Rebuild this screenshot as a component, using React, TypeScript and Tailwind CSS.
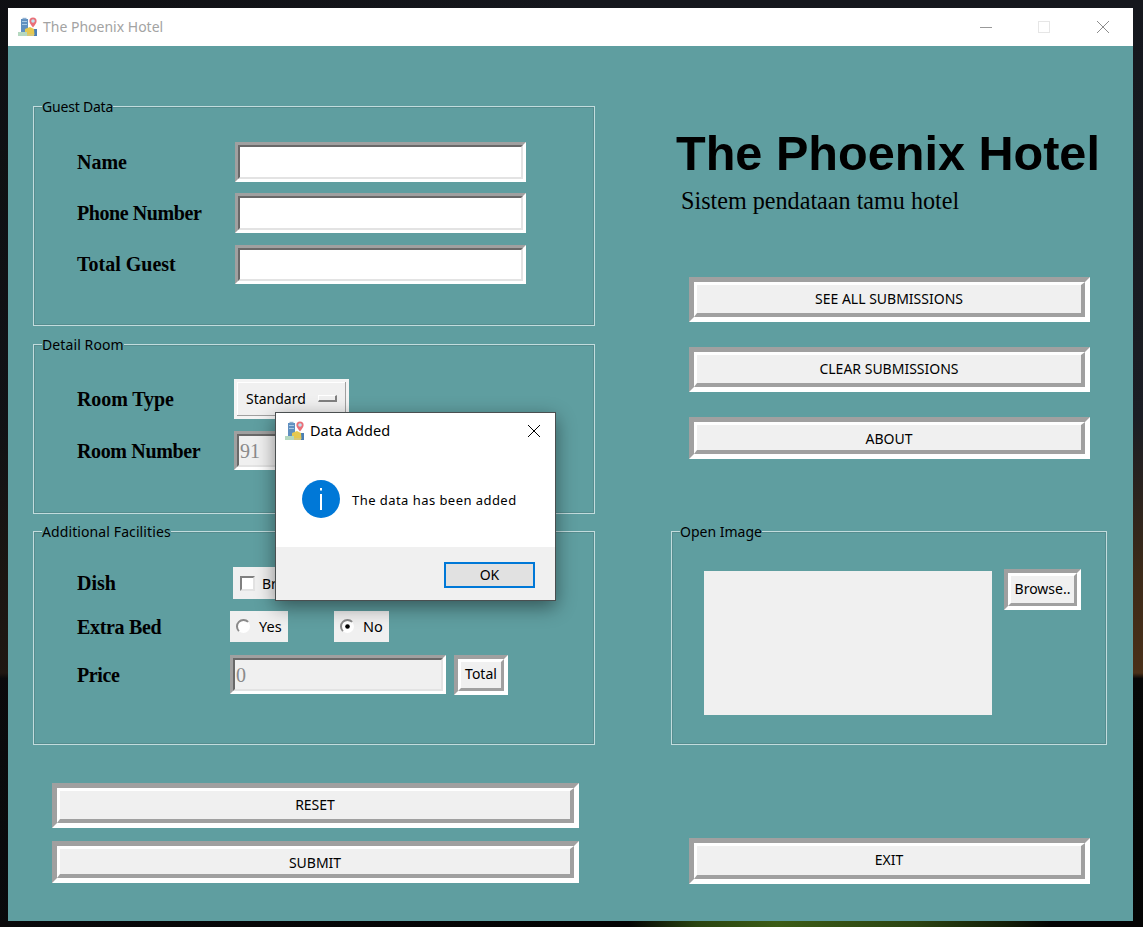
import React from "react";

const ui = "font-['Noto_Sans','Open_Sans',sans-serif]";
const serif = "font-['Liberation_Serif','Times_New_Roman',serif]";

function HotelIcon() {
  return (
    <svg width="20" height="20" viewBox="0 0 20 20" className="shrink-0">
      <rect x="3" y="2" width="7" height="16" fill="#5f8fc0" />
      <rect x="4.5" y="0.8" width="4" height="1.4" fill="#8fb0d0" />
      <rect x="4" y="4" width="5" height="1" fill="#a9c9e4" />
      <rect x="4" y="7" width="5" height="1" fill="#a9c9e4" />
      <rect x="14" y="12" width="5" height="7" fill="#4a7fb5" />
      <path d="M7 12 L12 10 L16 12 L16.5 18 L7 18 Z" fill="#e6c850" />
      <rect x="0" y="15" width="9" height="4" fill="#b5d8c0" />
      <rect x="9" y="17" width="7" height="2" fill="#d8c878" />
      <path d="M15 10.5 C12.2 7 11.4 5.6 11.4 4 A3.6 3.6 0 0 1 18.6 4 C18.6 5.6 17.8 7 15 10.5 Z" fill="#ea6f78" />
      <circle cx="15" cy="4" r="1.8" fill="#bfe3f0" />
    </svg>
  );
}

function Raised({
  className,
  children,
  thin,
  inner = "",
}: {
  className: string;
  children?: React.ReactNode;
  thin?: boolean;
  inner?: string;
}) {
  return (
    <div
      className={`${thin ? "border-4" : "border-[5px]"} border-t-[#a0a0a0] border-l-[#a0a0a0] border-b-white border-r-white ${className}`}
    >
      <div
        className={`h-full flex items-center justify-center bg-[#f0f0f0] text-[14px] text-black ${ui} ${thin ? "border-[3px]" : "border-[3px] border-b-4 border-r-4"} border-t-white border-l-white border-b-[#a0a0a0] border-r-[#a0a0a0] ${inner}`}
      >
        {children}
      </div>
    </div>
  );
}

function Sunken({ className, value, disabled }: { className: string; value?: string; disabled?: boolean }) {
  return (
    <div className={`border-[3px] border-t-[#a0a0a0] border-l-[#a0a0a0] border-b-white border-r-white ${className}`}>
      <div
        className={`h-full flex items-center pl-[1px] border-2 border-t-[#696969] border-l-[#696969] border-b-[#e3e3e3] border-r-[#e3e3e3] text-[20px] text-[#8a8a8a] ${serif} ${disabled ? "bg-[#f0f0f0]" : "bg-white"}`}
      >
        {value}
      </div>
    </div>
  );
}

function Group({
  title,
  className,
  titleClass = "",
  children,
}: {
  title: string;
  className: string;
  titleClass?: string;
  children?: React.ReactNode;
}) {
  return (
    <div className={`relative border border-[#c2dcdd] shadow-[inset_0_0_0_1px_#568d8f] ${className}`}>
      <span className={`absolute left-[8px] top-[-9px] bg-[#5f9ea0] text-[14px] leading-[18px] text-black ${ui} ${titleClass}`}>{title}</span>
      {children}
    </div>
  );
}

function Label({ children, className }: { children: React.ReactNode; className: string }) {
  return <div className={`${serif} text-[20px] font-bold leading-none text-black shrink-0 ${className}`}>{children}</div>;
}

function Radio({ label, checked, className }: { label: string; checked?: boolean; className: string }) {
  return (
    <div className={`flex items-center h-[31px] pl-[6px] bg-[#f0f0f0] text-[14.5px] text-black ${ui} ${className}`}>
      <svg width="15" height="15" viewBox="0 0 15 15" className="shrink-0 mr-[8px] -mt-[1px]">
        <circle cx="7.5" cy="7.5" r="6.5" fill="#ffffff" />
        <path d="M2.9 12.1 A6.5 6.5 0 0 1 12.1 2.9" fill="none" stroke="#8a8a8a" strokeWidth="2" />
        {checked && <circle cx="7.5" cy="7.5" r="2.3" fill="#000000" />}
      </svg>
      {label}
    </div>
  );
}

export default function App() {
  return (
    <div className="w-[1143px] h-[927px] overflow-hidden pt-[8px] pl-[8px] [background:linear-gradient(90deg,transparent_55%,#2a4410_61%,#3c5c16_68%,#2c4412_80%,#141f08_88%,transparent_92%)_bottom/100%_6px_no-repeat,linear-gradient(90deg,rgba(12,12,14,0.7),rgba(12,12,14,0)_50%),linear-gradient(180deg,#15171d_0%,#1b1d24_45%,#3d2a18_62%,#4a3018_72.6%,#070707_73.2%,#040404_100%)]">
      <div className="relative w-[1125px] h-[913px] flex flex-col bg-[#5f9ea0]">
        {/* Title bar */}
        <div className="h-[38px] shrink-0 bg-white flex items-center pl-[10px]">
          <HotelIcon />
          <span className={`ml-[5px] -mt-[1px] text-[14px] text-[#a3a3a3] ${ui}`}>The Phoenix Hotel</span>
          <div className="ml-auto flex items-center">
            <svg width="14" height="14" viewBox="0 0 14 14" className="mr-[44px]">
              <path d="M1 7.5 H13" stroke="#999999" strokeWidth="1" />
            </svg>
            <svg width="14" height="14" viewBox="0 0 14 14" className="mr-[45px]">
              <rect x="1.5" y="1.5" width="11" height="11" fill="none" stroke="#e6e6e6" strokeWidth="1" />
            </svg>
            <svg width="14" height="14" viewBox="0 0 14 14" className="mr-[23px]">
              <path d="M1 1 L13 13 M13 1 L1 13" stroke="#8c8c8c" strokeWidth="1" />
            </svg>
          </div>
        </div>

        {/* Body */}
        <div className="flex flex-1">
          {/* Left column */}
          <div className="w-[587px] shrink-0 pl-[25px] pt-[60px]">
            <Group title="Guest Data" titleClass="tracking-[-0.2px]" className="w-[562px] h-[220px] pt-[35px] pl-[43px]">
              <div className="flex items-center">
                <Label className="w-[158px]">Name</Label>
                <Sunken className="w-[291px] h-[40px]" />
              </div>
              <div className="flex items-center mt-[11px]">
                <Label className="w-[158px] tracking-[-0.42px]">Phone Number</Label>
                <Sunken className="w-[291px] h-[40px]" />
              </div>
              <div className="flex items-center mt-[12px]">
                <Label className="w-[158px] pb-[2px]">Total Guest</Label>
                <Sunken className="w-[291px] h-[39px]" />
              </div>
            </Group>

            <Group title="Detail Room" titleClass="tracking-[0.1px]" className="mt-[18px] w-[562px] h-[170px] pt-[34px] pl-[43px] flex flex-col gap-[12px]">
              <div className="flex items-center">
                <Label className="w-[157px] tracking-[-0.1px]">Room Type</Label>
                <div className="w-[115px] h-[40px] border-[3px] border-[#f4f4f4] bg-[#f0f0f0] shadow-[inset_-1px_-1px_0_#a0a0a0,inset_1px_1px_0_#ffffff] flex items-center pl-[9px]">
                  <span className={`text-[14px] text-black -mt-[1px] ${ui}`}>Standard</span>
                  <span className="ml-auto mr-[9px] -mt-[1px] w-[19px] h-[7px] bg-[#f0f0f0] border border-b-2 border-r-2 border-t-white border-l-white border-b-[#808080] border-r-[#808080]" />
                </div>
              </div>
              <div className="flex items-center">
                <Label className="w-[157px] tracking-[-0.36px]">Room Number</Label>
                <Sunken className="w-[291px] h-[39px]" value="91" disabled />
              </div>
            </Group>

            <Group title="Additional Facilities" titleClass="tracking-[0.1px]" className="mt-[17px] w-[562px] h-[214px] pt-[35px] pl-[43px]">
              <div className="flex items-center h-[32px]">
                <Label className="w-[156px]">Dish</Label>
                <div className={`flex items-center h-[32px] pl-[7px] pr-[10px] bg-[#f0f0f0] text-[14px] text-black ${ui}`}>
                  <span className="w-[15px] h-[15px] mr-[7px] bg-white border-2 border-t-[#808080] border-l-[#808080] border-b-[#e3e3e3] border-r-[#e3e3e3]" />
                  Breakfast
                </div>
              </div>
              <div className="flex items-center mt-[12px]">
                <Label className="w-[153px] tracking-[-0.33px]">Extra Bed</Label>
                <Radio label="Yes" className="w-[58px]" />
                <Radio label="No" checked className="ml-[46px] w-[55px]" />
              </div>
              <div className="flex items-start mt-[13px]">
                <Label className="w-[153px] self-center tracking-[-0.4px]">Price</Label>
                <Sunken className="w-[216px] h-[39px]" value="0" disabled />
                <Raised thin inner="pb-[3px]" className="ml-[8px] w-[54px] h-[40px]">
                  Total
                </Raised>
              </div>
            </Group>

            <div className="ml-[19px] mt-[38px] flex flex-col gap-[13px]">
              <Raised inner="pb-[2px]" className="w-[527px] h-[45px]">RESET</Raised>
              <Raised inner="pt-[2px]" className="w-[527px] h-[42px]">SUBMIT</Raised>
            </div>
          </div>

          {/* Right column */}
          <div className="flex-1 flex flex-col pt-[79px]">
            <div className="ml-[81px] h-[56px] font-['Liberation_Sans',Arial,sans-serif] font-bold text-[48.6px] leading-[56px] text-black whitespace-nowrap">
              The Phoenix Hotel
            </div>
            <div className={`ml-[86px] mt-[5px] h-[30px] text-[24.15px] leading-[30px] text-black whitespace-nowrap ${serif}`}>
              Sistem pendataan tamu hotel
            </div>
            <Raised inner="pb-[2px]" className="ml-[94px] mt-[61px] w-[401px] h-[45px]">SEE ALL SUBMISSIONS</Raised>
            <Raised inner="pb-[2px]" className="ml-[94px] mt-[25px] w-[401px] h-[45px]">CLEAR SUBMISSIONS</Raised>
            <Raised inner="pt-[2px]" className="ml-[94px] mt-[25px] w-[401px] h-[42px]">ABOUT</Raised>
            <Group title="Open Image" className="ml-[76px] mt-[72px] w-[436px] h-[214px] pt-[37px] pl-[32px] flex items-start">
              <div className="mt-[2px] w-[288px] h-[144px] bg-[#f0f0f0]" />
              <Raised thin inner="pb-[2px]" className="ml-[12px] w-[77px] h-[41px]">
                Browse..
              </Raised>
            </Group>
            <Raised inner="pb-[2px]" className="ml-[94px] mt-[93px] w-[401px] h-[46px]">EXIT</Raised>
          </div>
        </div>

        {/* Message dialog */}
        <div className="absolute left-[267px] top-[404px] w-[281px] h-[189px] flex flex-col bg-white border border-[#4a4f50] shadow-[0_6px_18px_rgba(0,0,0,0.45)]">
          <div className="h-[36px] shrink-0 flex items-center pl-[9px]">
            <HotelIcon />
            <span className={`ml-[5px] text-[14.5px] text-black ${ui}`}>Data Added</span>
            <svg width="14" height="14" viewBox="0 0 14 14" className="ml-auto mr-[14px]">
              <path d="M1 1 L13 13 M13 1 L1 13" stroke="#000000" strokeWidth="1" />
            </svg>
          </div>
          <div className="flex-1 flex items-center pl-[26px] pt-[2px]">
            <svg width="38" height="38" viewBox="0 0 38 38" className="shrink-0">
              <circle cx="19" cy="19" r="19" fill="#0078d7" />
              <rect x="18" y="8" width="2" height="2.5" fill="#ffffff" />
              <rect x="18" y="14" width="2" height="16" fill="#ffffff" />
            </svg>
            <span className={`ml-[12px] mt-[3px] text-[13px] tracking-[0.45px] text-black ${ui}`}>The data has been added</span>
          </div>
          <div className="h-[53px] shrink-0 bg-[#f0f0f0] flex justify-end items-start pt-[15px] pr-[20px]">
            <div className={`w-[91px] h-[26px] pb-[2px] flex items-center justify-center bg-[#e1e1e1] border-2 border-[#0078d7] text-[14px] text-black ${ui}`}>
              OK
            </div>
          </div>
        </div>
      </div>
    </div>
  );
}
